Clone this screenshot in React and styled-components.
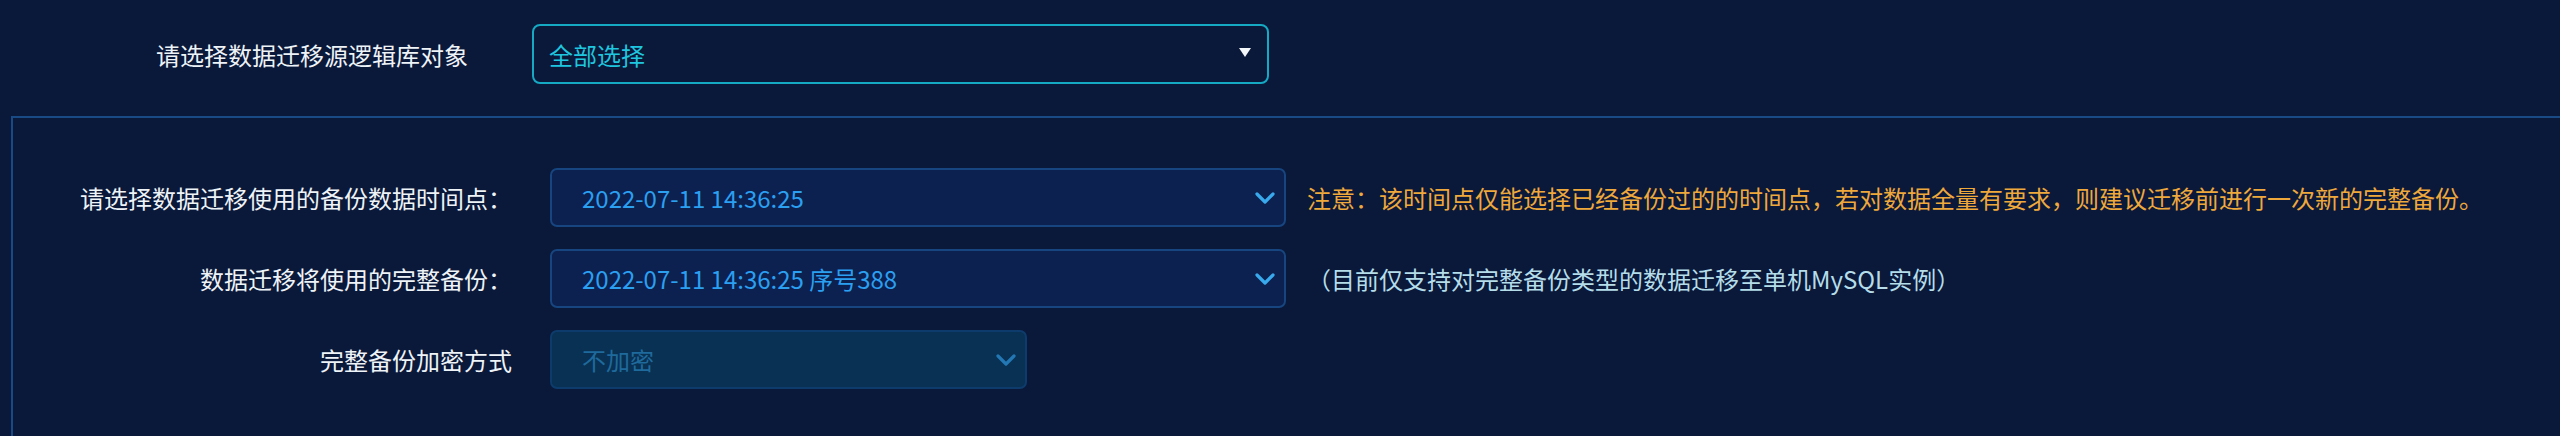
import React from 'react';
import styled, { createGlobalStyle } from 'styled-components';

const GlobalStyle = createGlobalStyle`
  html, body {
    margin: 0;
    padding: 0;
    background: #0a1839;
  }
  body {
    font-family: "Noto Sans CJK SC", "Noto Sans", sans-serif;
    overflow: hidden;
  }
`;

const Page = styled.div`
  width: 2560px;
  height: 436px;
  background: #0a1839;
  padding-top: 24px;
  box-sizing: border-box;
`;

const TopRow = styled.div`
  display: grid;
  grid-template-columns: 532px 737px;
  align-items: center;
`;

const TopLabel = styled.div`
  padding-left: 156px;
  font-size: 24px;
  color: #eef3f8;
`;

const TopSelect = styled.div`
  height: 60px;
  box-sizing: border-box;
  border: 2px solid #15a9c4;
  border-radius: 8px;
  display: flex;
  align-items: center;
  justify-content: space-between;
  padding: 0 16px 0 15px;
  font-size: 24px;
  color: #1fc6df;
`;

const Triangle = styled.span`
  width: 0;
  height: 0;
  border-left: 6.5px solid transparent;
  border-right: 6.5px solid transparent;
  border-top: 9px solid #f4f7fa;
  margin-top: -4px;
`;

const Panel = styled.div`
  margin: 32px 0 0 11px;
  border: 2px solid #1a4a86;
  border-right: none;
  border-bottom: none;
  padding-top: 50px;
  display: flex;
  flex-direction: column;
  gap: 22px;
  height: 320px;
  box-sizing: border-box;
`;

const Row = styled.div`
  display: grid;
  grid-template-columns: 499px ${p => p.$width}px auto;
  column-gap: 38px;
  align-items: center;
`;

const Label = styled.div`
  text-align: right;
  font-size: 24px;
  color: #eef3f8;
  white-space: nowrap;
`;

const Select = styled.div`
  height: 59px;
  box-sizing: border-box;
  border: 2px solid ${p => (p.$disabled ? '#0d3c6c' : '#17457f')};
  background: ${p => (p.$disabled ? '#093154' : '#0c2150')};
  border-radius: 7px;
  display: flex;
  align-items: center;
  justify-content: space-between;
  padding: 0 9px 0 30px;
  font-size: 24px;
  color: ${p => (p.$disabled ? '#1f6a9c' : '#2b9ff0')};
`;

const Note = styled.div`
  margin-left: -17px;
  font-size: 24px;
  white-space: nowrap;
  color: ${p => (p.$warn ? '#eea83c' : '#b4dde9')};
`;

const Chevron = ({ color }) => (
  <svg width="20" height="12" viewBox="0 0 20 12">
    <polyline
      points="2,2 10,10 18,2"
      fill="none"
      stroke={color}
      strokeWidth="3.2"
      strokeLinecap="round"
      strokeLinejoin="round"
    />
  </svg>
);

export default function App() {
  return (
    <Page>
      <GlobalStyle />
      <TopRow>
        <TopLabel>请选择数据迁移源逻辑库对象</TopLabel>
        <TopSelect>
          <span>全部选择</span>
          <Triangle />
        </TopSelect>
      </TopRow>
      <Panel>
        <Row $width={736}>
          <Label>请选择数据迁移使用的备份数据时间点：</Label>
          <Select>
            <span>2022-07-11 14:36:25</span>
            <Chevron color="#38a9ec" />
          </Select>
          <Note $warn>注意：该时间点仅能选择已经备份过的的时间点，若对数据全量有要求，则建议迁移前进行一次新的完整备份。</Note>
        </Row>
        <Row $width={736}>
          <Label>数据迁移将使用的完整备份：</Label>
          <Select>
            <span>2022-07-11 14:36:25 序号388</span>
            <Chevron color="#38a9ec" />
          </Select>
          <Note>（目前仅支持对完整备份类型的数据迁移至单机MySQL实例）</Note>
        </Row>
        <Row $width={477}>
          <Label>完整备份加密方式</Label>
          <Select $disabled>
            <span>不加密</span>
            <Chevron color="#2378b4" />
          </Select>
        </Row>
      </Panel>
    </Page>
  );
}
